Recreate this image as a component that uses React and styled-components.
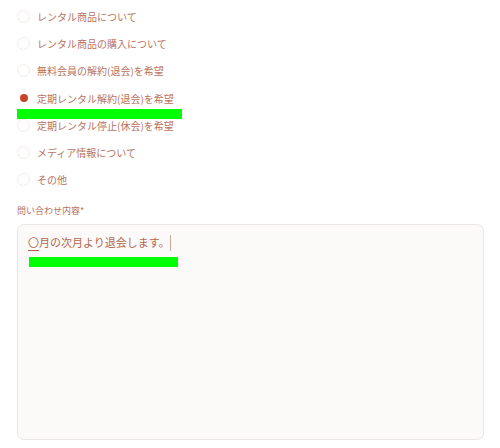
import styled, { createGlobalStyle } from "styled-components";

const GlobalStyle = createGlobalStyle`
  body {
    margin: 0;
    background: #ffffff;
    font-family: "Noto Sans CJK JP", "Noto Sans", sans-serif;
  }
`;

const Page = styled.div`
  width: 500px;
  height: 448px;
  padding: 3px 16px 0 17px;
  box-sizing: border-box;
  color: #b8735f;
`;

const RadioList = styled.div`
  display: flex;
  flex-direction: column;
`;

const Row = styled.label`
  position: relative;
  display: flex;
  align-items: center;
  gap: 7px;
  height: 27.2px;
  font-size: 10px;
`;

const Circle = styled.span`
  width: 13px;
  height: 13px;
  box-sizing: border-box;
  border-radius: 50%;
  border: 1px solid ${(p) => (p.checked ? "#ffffff" : "#f1ece8")};
  display: flex;
  align-items: center;
  justify-content: center;

  &::after {
    content: "";
    width: 8px;
    height: 8px;
    border-radius: 50%;
    background: ${(p) => (p.checked ? "#c8432a" : "transparent")};
  }
`;

const Mark = styled.span`
  position: absolute;
  left: ${(p) => p.left}px;
  top: ${(p) => p.top}px;
  width: ${(p) => p.w}px;
  height: 10px;
  background: #00ff00;
`;

const FieldLabel = styled.div`
  margin-top: 12px;
  font-size: 9px;
  line-height: 12px;
  color: #b8735f;
`;

const Box = styled.div`
  position: relative;
  margin-top: 7px;
  width: 467px;
  height: 216px;
  box-sizing: border-box;
  background: #fcfaf8;
  border: 1px solid #ebe6e1;
  border-radius: 7px;
  padding: 8px 10px;
  font-size: 11px;
  line-height: 18px;
  color: #b4664f;
`;

const Composing = styled.span`
  text-decoration: underline;
  text-underline-offset: 3px;
`;

const Caret = styled.span`
  display: inline-block;
  width: 1px;
  height: 16px;
  vertical-align: -4px;
  background: #c9a89c;
`;

const options = [
  "レンタル商品について",
  "レンタル商品の購入について",
  "無料会員の解約(退会)を希望",
  "定期レンタル解約(退会)を希望",
  "定期レンタル停止(休会)を希望",
  "メディア情報について",
  "その他",
];

export default function App() {
  return (
    <>
      <GlobalStyle />
      <Page>
        <RadioList>
          {options.map((text, i) => (
            <Row key={text}>
              <Circle checked={i === 3} />
              {text}
              {i === 3 && <Mark left={0} top={24} w={165} />}
            </Row>
          ))}
        </RadioList>
        <FieldLabel>問い合わせ内容*</FieldLabel>
        <Box>
          <Composing>〇</Composing>月の次月より退会します。<Caret />
          <Mark left={11} top={32} w={149} />
        </Box>
      </Page>
    </>
  );
}
